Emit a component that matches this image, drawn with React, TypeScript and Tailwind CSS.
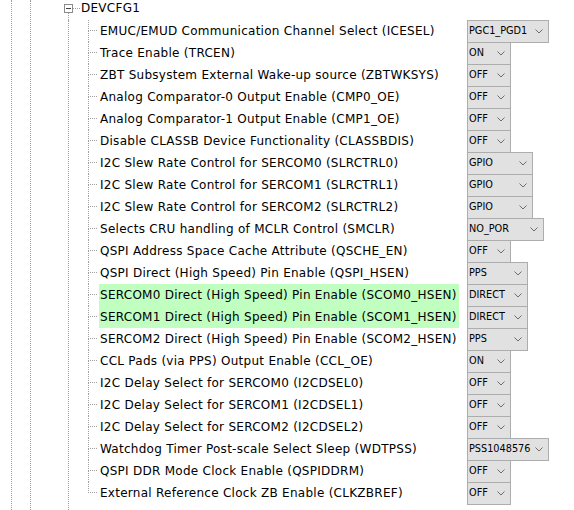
import React from "react";

type Row = { label: string; value: string; w: number; hl?: boolean };

const rows: Row[] = [
  { label: "EMUC/EMUD Communication Channel Select (ICESEL)", value: "PGC1_PGD1", w: 82 },
  { label: "Trace Enable (TRCEN)", value: "ON", w: 44 },
  { label: "ZBT Subsystem External Wake-up source (ZBTWKSYS)", value: "OFF", w: 44 },
  { label: "Analog Comparator-0 Output Enable (CMP0_OE)", value: "OFF", w: 44 },
  { label: "Analog Comparator-1 Output Enable (CMP1_OE)", value: "OFF", w: 44 },
  { label: "Disable CLASSB Device Functionality (CLASSBDIS)", value: "OFF", w: 44 },
  { label: "I2C Slew Rate Control for SERCOM0 (SLRCTRL0)", value: "GPIO", w: 66 },
  { label: "I2C Slew Rate Control for SERCOM1 (SLRCTRL1)", value: "GPIO", w: 66 },
  { label: "I2C Slew Rate Control for SERCOM2 (SLRCTRL2)", value: "GPIO", w: 66 },
  { label: "Selects CRU handling of MCLR Control (SMCLR)", value: "NO_POR", w: 77 },
  { label: "QSPI Address Space Cache Attribute (QSCHE_EN)", value: "OFF", w: 44 },
  { label: "QSPI Direct (High Speed) Pin Enable (QSPI_HSEN)", value: "PPS", w: 61 },
  { label: "SERCOM0 Direct (High Speed) Pin Enable (SCOM0_HSEN)", value: "DIRECT", w: 61, hl: true },
  { label: "SERCOM1 Direct (High Speed) Pin Enable (SCOM1_HSEN)", value: "DIRECT", w: 61, hl: true },
  { label: "SERCOM2 Direct (High Speed) Pin Enable (SCOM2_HSEN)", value: "PPS", w: 61 },
  { label: "CCL Pads (via PPS) Output Enable (CCL_OE)", value: "ON", w: 44 },
  { label: "I2C Delay Select for SERCOM0 (I2CDSEL0)", value: "OFF", w: 44 },
  { label: "I2C Delay Select for SERCOM1 (I2CDSEL1)", value: "OFF", w: 44 },
  { label: "I2C Delay Select for SERCOM2 (I2CDSEL2)", value: "OFF", w: 44 },
  { label: "Watchdog Timer Post-scale Select Sleep (WDTPSS)", value: "PSS1048576", w: 82 },
  { label: "QSPI DDR Mode Clock Enable (QSPIDDRM)", value: "OFF", w: 44 },
  { label: "External Reference Clock ZB Enable (CLKZBREF)", value: "OFF", w: 44 },
];

function Chevron() {
  return (
    <svg width="8" height="5" viewBox="0 0 8 5" className="shrink-0">
      <polyline points="0.5,0.5 4,4 7.5,0.5" fill="none" stroke="#6d6d6d" strokeWidth="1" />
    </svg>
  );
}

function Combo({ value, w }: { value: string; w: number }) {
  return (
    <div
      className="h-[23px] shrink-0 border border-[#adadad] bg-[#e1e1e1] flex items-center justify-between pl-[1px] pr-[5px] text-[10.8px] text-black"
      style={{ width: w, fontFamily: '"DejaVu Sans Condensed", "Liberation Sans", sans-serif' }}
    >
      <span className="leading-none">{value}</span>
      <Chevron />
    </div>
  );
}

export default function App() {
  return (
    <div
      className="w-[574px] h-[510px] bg-white overflow-hidden flex text-black"
      style={{ fontFamily: '"DejaVu Sans", sans-serif' }}
    >
      <div className="w-[11px] shrink-0" />
      <div className="w-[19px] shrink-0 border-l border-dotted border-[#a0a0a0]" />
      <div className="w-[34px] shrink-0 border-l border-dotted border-[#a0a0a0]" />
      <div className="flex-1 flex flex-col">
        <div className="h-[20px] flex items-start">
          <div className="w-[9px] h-full flex flex-col shrink-0 mt-[4px]">
            <div className="w-[9px] h-[9px] border border-[#8a8a8a] flex items-center justify-center">
              <div className="w-[5px] h-px bg-[#404040]" />
            </div>
            <div className="flex-1 ml-[4px] border-l border-dotted border-[#a0a0a0]" />
          </div>
          <div className="w-[7px] mt-[8px] border-t border-dotted border-[#a0a0a0]" />
          <div className="text-[12px] leading-[16px] ml-[1px] tracking-[0.27px]">DEVCFG1</div>
        </div>
        <div className="flex-1 ml-[4px] border-l border-dotted border-[#a0a0a0] pl-[19px] flex flex-col">
          {rows.map((r, i) => {
            const last = i === rows.length - 1;
            return (
              <div key={i} className="h-[22px] flex items-start">
                <div className="w-[11px] h-full flex flex-col shrink-0">
                  <div className="h-[11px] border-l border-b border-dotted border-[#a0a0a0] w-[9px]" />
                  <div
                    className={
                      last
                        ? "flex-1"
                        : "flex-1 border-l border-dotted border-[#a0a0a0]"
                    }
                  />
                </div>
                <div className="w-[368px] h-[22px] shrink-0 flex items-center text-[12px] tracking-[0.27px] whitespace-nowrap">
                  <span
                    className={
                      r.hl
                        ? "bg-[#c0ffc0] h-full flex items-center pl-[1px] pr-[2px]"
                        : "h-full flex items-center pl-[1px] pr-[2px]"
                    }
                  >
                    {r.label}
                  </span>
                </div>
                <Combo value={r.value} w={r.w} />
              </div>
            );
          })}
        </div>
      </div>
    </div>
  );
}
